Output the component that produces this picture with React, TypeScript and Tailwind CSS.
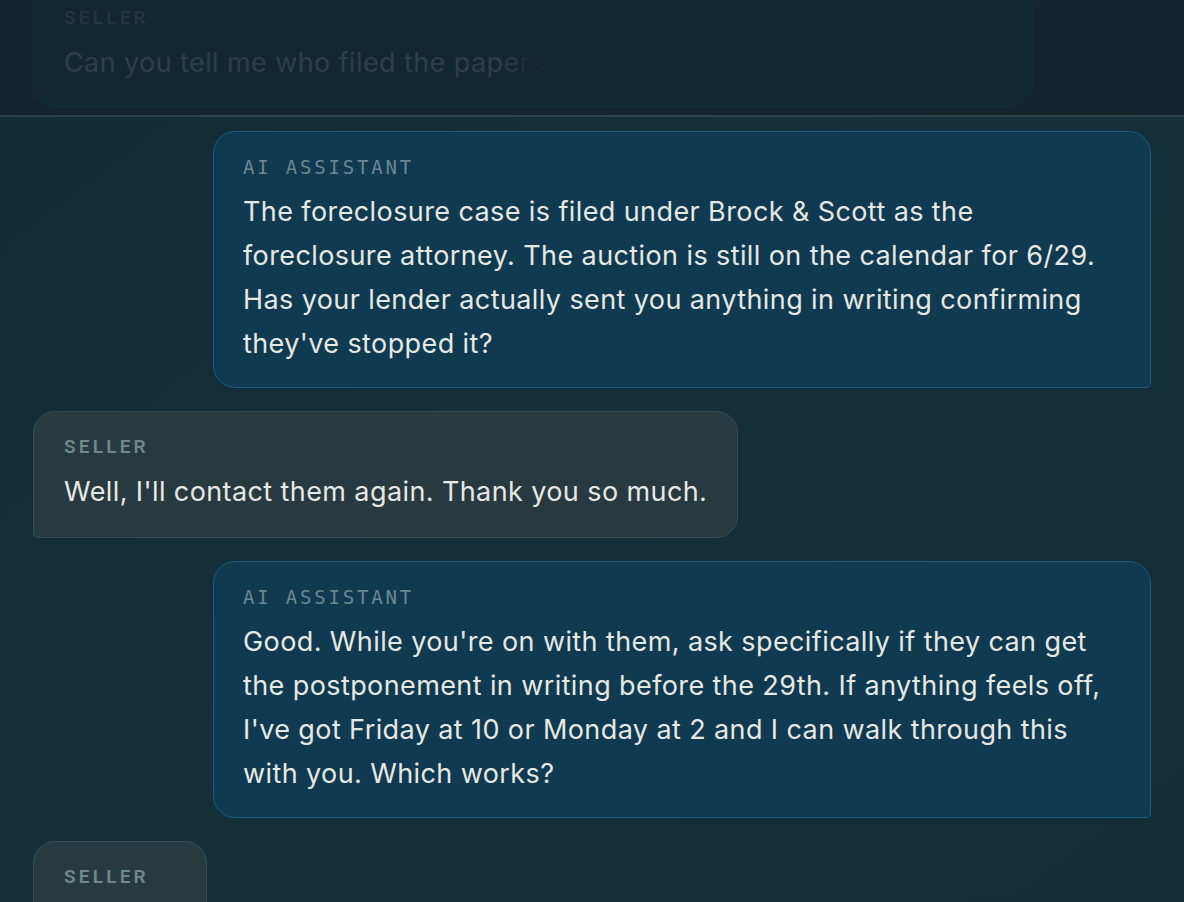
type Msg = { from: 'seller' | 'ai'; lines: string[] };

const messages: Msg[] = [
  {
    from: 'ai',
    lines: [
      'The foreclosure case is filed under Brock & Scott as the',
      'foreclosure attorney. The auction is still on the calendar for 6/29.',
      'Has your lender actually sent you anything in writing confirming',
      "they've stopped it?",
    ],
  },
  { from: 'seller', lines: ["Well, I'll contact them again. Thank you so much."] },
  {
    from: 'ai',
    lines: [
      "Good. While you're on with them, ask specifically if they can get",
      'the postponement in writing before the 29th. If anything feels off,',
      "I've got Friday at 10 or Monday at 2 and I can walk through this",
      'with you. Which works?',
    ],
  },
  { from: 'seller', lines: ['Friday.'] },
];

const bodyText =
  "mt-[9px] font-['Inter','Noto_Sans',sans-serif] text-[27px] leading-[44px] tracking-[0.4px] text-[#e6e8e4] whitespace-nowrap";

function Lines({ lines }: { lines: string[] }) {
  return (
    <p className={bodyText}>
      {lines.map((l, i) => (
        <span key={i} className="block">
          {l}
        </span>
      ))}
    </p>
  );
}

function Bubble({ msg }: { msg: Msg }) {
  if (msg.from === 'ai') {
    return (
      <div className="ml-[180px] rounded-[22px] rounded-br-[5px] border border-[#1b5b80] bg-[#0f3a4f] px-[29px] pt-[21px] pb-[21px]">
        <div className="font-['DejaVu_Sans_Mono','Liberation_Mono',monospace] text-[19px] leading-[28px] tracking-[2.8px] text-[#6c8792]">
          AI ASSISTANT
        </div>
        <Lines lines={msg.lines} />
      </div>
    );
  }
  return (
    <div className="w-fit min-w-[174px] rounded-[22px] rounded-bl-[5px] border border-[#394c51] bg-[#273a40] px-[30px] pt-[21px] pb-[23px]">
      <div className="font-['Roboto','Liberation_Sans',sans-serif] text-[19px] font-semibold leading-[28px] tracking-[3.2px] text-[#72878a]">
        SELLER
      </div>
      <Lines lines={msg.lines} />
    </div>
  );
}

export default function App() {
  return (
    <div className="h-[902px] w-[1184px] overflow-hidden bg-gradient-to-br from-[#132b34] via-[#15303a] to-[#142d36]">
      {/* faded earlier message */}
      <div className="flex h-[117px] flex-col justify-end overflow-hidden border-b-2 border-[#2c4247] bg-[#12252d] px-[33px] pb-[7px]">
        <div className="w-[1000px] shrink-0 rounded-[22px] border border-[#162a31] bg-[#13272f] px-[30px] pt-[21px] pb-[22px]">
          <div className="font-['Roboto','Liberation_Sans',sans-serif] text-[19px] font-semibold leading-[28px] tracking-[3.2px] text-[#22363c]">
            SELLER
          </div>
          <p className="mt-[9px] font-['Inter','Noto_Sans',sans-serif] text-[27px] leading-[44px] tracking-[0.4px] text-[#2d4046]">
            Can you tell me who filed the pap<span className="text-[#26393f]">e</span>
            <span className="text-[#1e3138]">r</span>
            <span className="text-[#182b32]">s</span>
          </p>
        </div>
      </div>

      <div className="flex flex-col gap-[23px] px-[33px] pt-[14px]">
        {messages.map((m, i) => (
          <Bubble key={i} msg={m} />
        ))}
      </div>
    </div>
  );
}
